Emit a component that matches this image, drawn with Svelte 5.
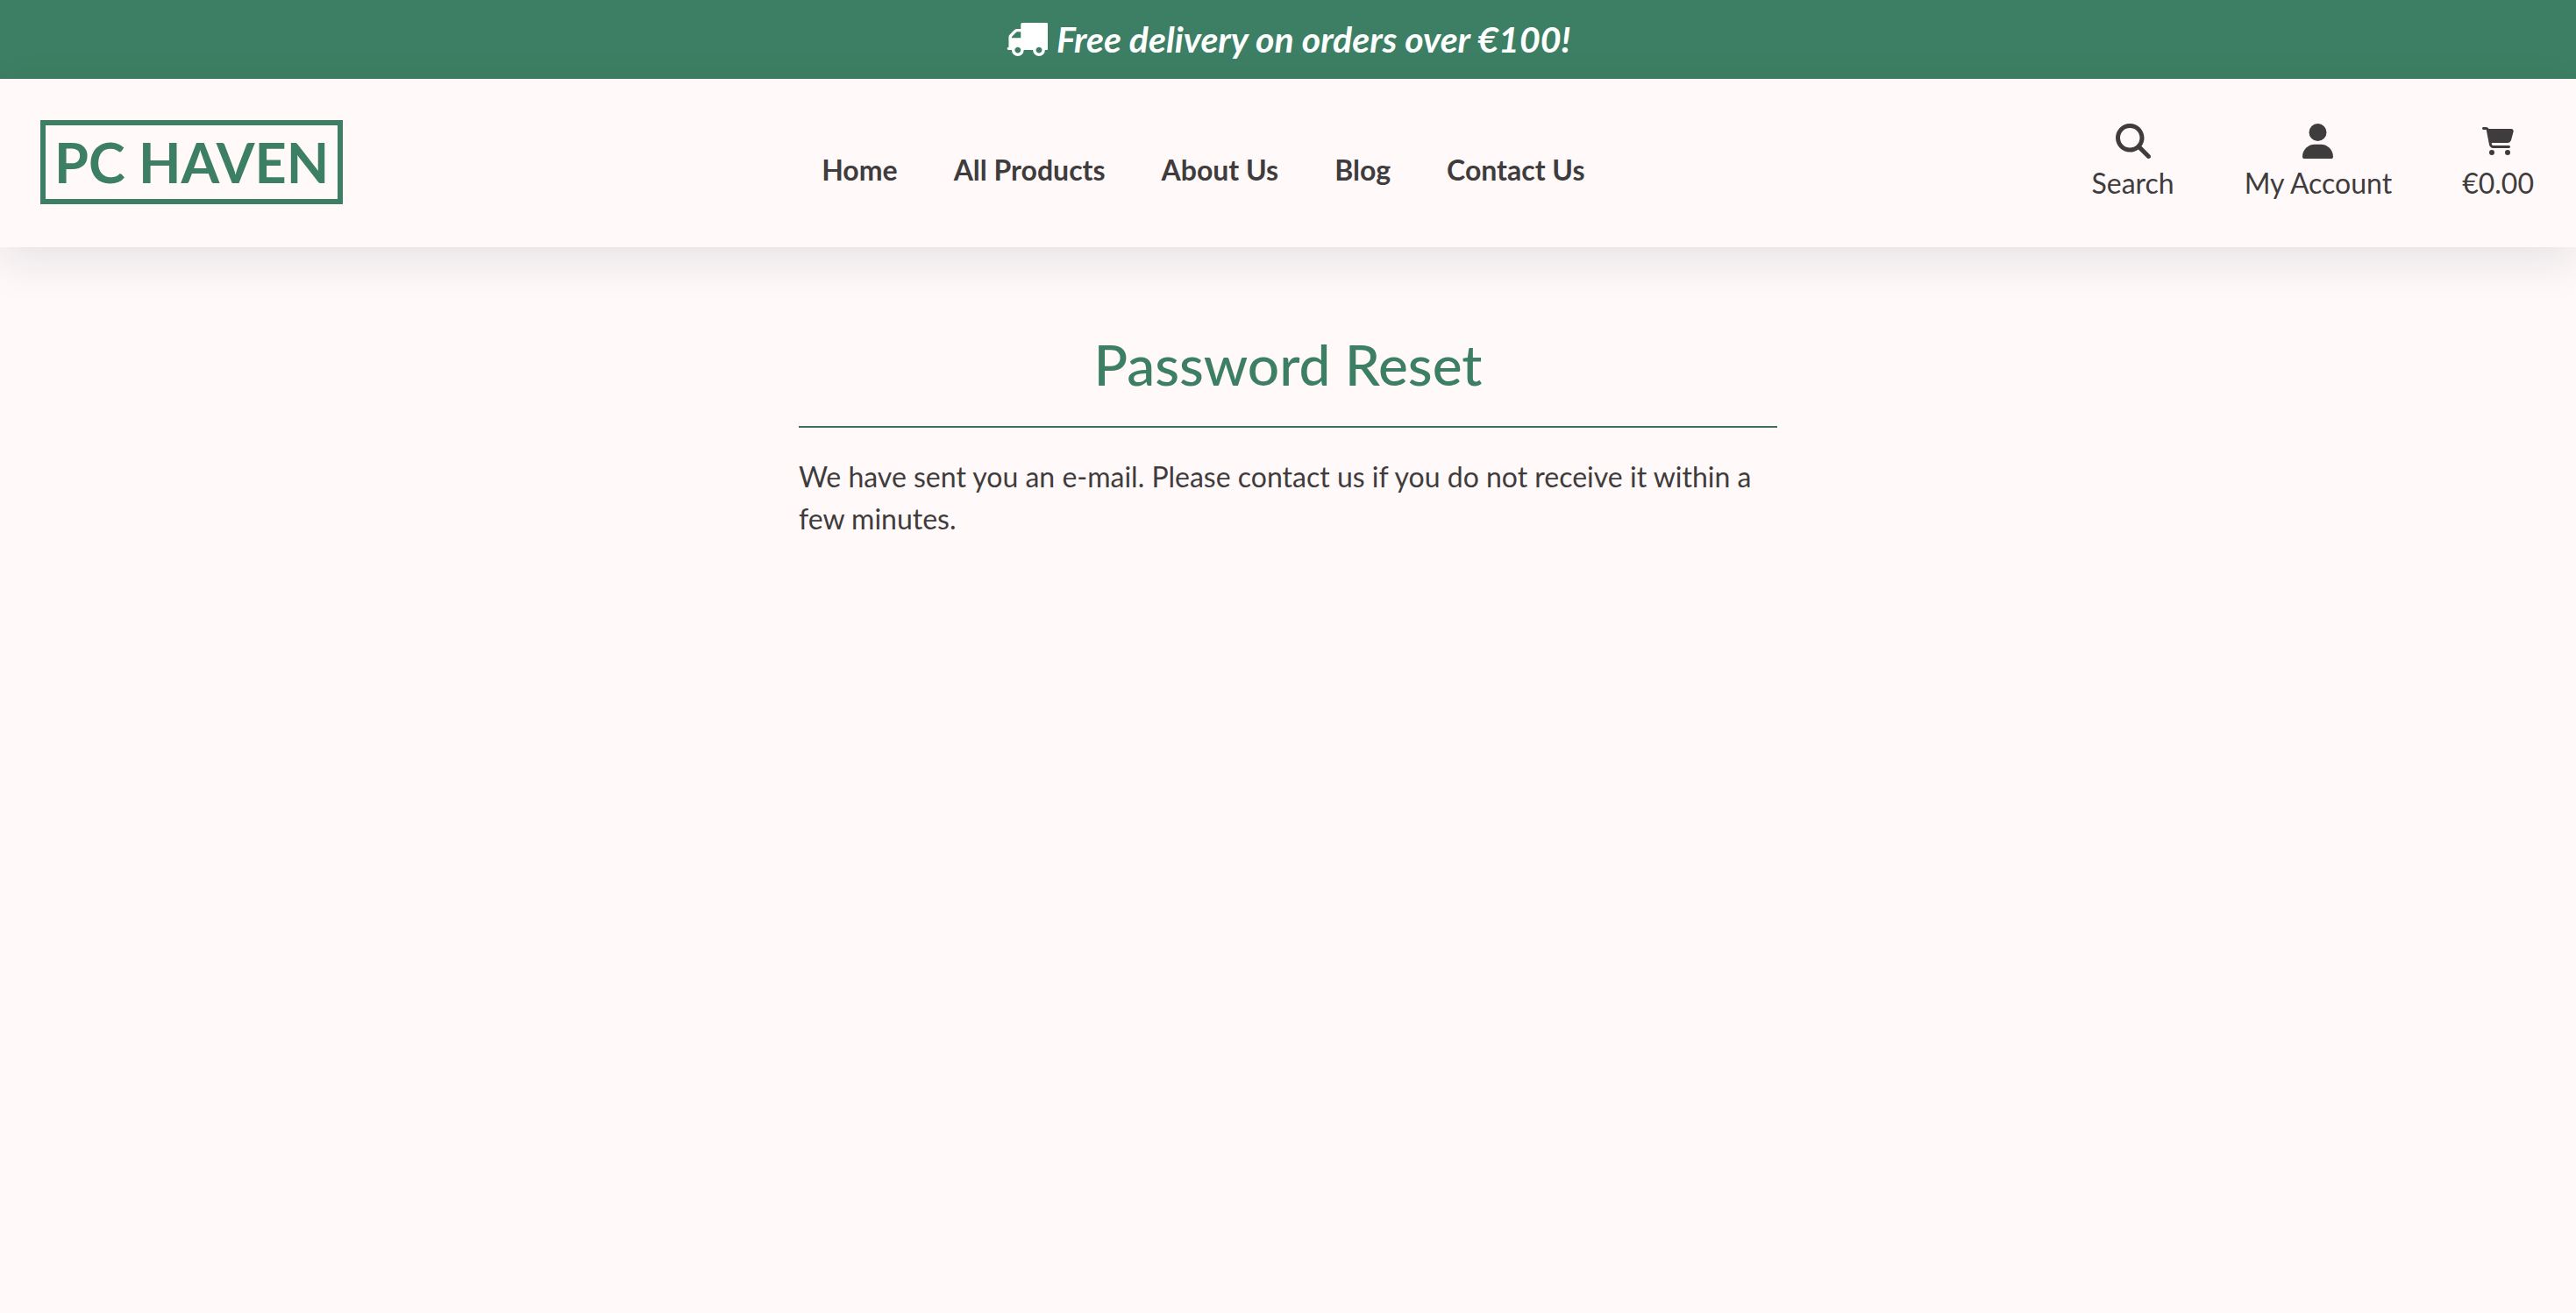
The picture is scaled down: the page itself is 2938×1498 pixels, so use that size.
<script>
  const links = ['Home', 'All Products', 'About Us', 'Blog', 'Contact Us'];
</script>

<div class="page">
  <div class="banner">
    <svg class="truck" viewBox="0 256 1792 1408" aria-hidden="true">
      <path d="M640 1408q0-52-38-90t-90-38-90 38-38 90 38 90 90 38 90-38 38-90zm-384-512h384v-256h-158q-13 0-22 9l-195 195q-9 9-9 22v30zm1280 512q0-52-38-90t-90-38-90 38-38 90 38 90 90 38 90-38 38-90zm256-1088v1024q0 15-4 26.500t-13.500 18.500-16.500 11.500-23.500 6-22.500 2-25.500 0-22.500-.5q0 106-75 181t-181 75-181-75-75-181h-384q0 106-75 181t-181 75-181-75-75-181h-64q-3 0-22.500.5t-25.500 0-22.500-2-23.500-6-16.500-11.500-13.500-18.500-4-26.500q0-26 19-45t45-19v-320q0-8-.5-35t0-38 2.500-34.500 6.500-37 14-30.500 22.500-30l198-198q19-19 50.500-32t58.500-13h160v-192q0-26 19-45t45-19h1024q26 0 45 19t19 45z" />
    </svg>
    <span>Free delivery on orders over €100!</span>
  </div>

  <header>
    <a class="logo" href="#home">PC HAVEN</a>
    <nav aria-label="Main">
      {#each links as link}
        <a href="#{link.toLowerCase().replace(' ', '-')}">{link}</a>
      {/each}
    </nav>
    <div class="tools">
      <button type="button">
        <span class="icon">
          <svg class="large" viewBox="0 0 512 512" aria-hidden="true">
            <path d="M416 208c0 45.900-14.900 88.300-40 122.700L502.600 457.400c12.500 12.500 12.500 32.800 0 45.300s-32.800 12.500-45.300 0L330.700 376c-34.400 25.200-76.800 40-122.700 40C93.100 416 0 322.900 0 208S93.100 0 208 0S416 93.100 416 208zM208 352a144 144 0 1 0 0-288 144 144 0 1 0 0 288z" />
          </svg>
        </span>
        Search
      </button>
      <button type="button">
        <span class="icon">
          <svg class="large" viewBox="0 0 448 512" aria-hidden="true">
            <path d="M224 256A128 128 0 1 0 224 0a128 128 0 1 0 0 256zm-45.700 48C79.800 304 0 383.800 0 482.300C0 498.700 13.300 512 29.700 512H418.300c16.400 0 29.700-13.300 29.700-29.700C448 383.800 368.200 304 269.700 304H178.300z" />
          </svg>
        </span>
        My Account
      </button>
      <a href="#basket">
        <span class="icon">
          <svg viewBox="0 0 576 512" aria-hidden="true">
            <path d="M0 24C0 10.700 10.700 0 24 0H69.500c22 0 41.500 12.800 50.600 32h411c26.300 0 45.500 25 38.600 50.400l-41 152.300c-8.500 31.400-37 53.300-69.500 53.300H170.700l5.400 28.500c2.200 11.300 12.100 19.500 23.600 19.500H488c13.300 0 24 10.700 24 24s-10.700 24-24 24H199.700c-34.600 0-64.300-24.600-70.700-58.500L77.400 54.500c-.7-3.800-4-6.500-7.900-6.500H24C10.700 48 0 37.300 0 24zM128 464a48 48 0 1 1 96 0 48 48 0 1 1-96 0zm336-48a48 48 0 1 1 0 96 48 48 0 1 1 0-96z" />
          </svg>
        </span>
        €0.00
      </a>
    </div>
  </header>

  <main>
    <h1>Password Reset</h1>
    <hr />
    <p>We have sent you an e-mail. Please contact us if you do not receive it within a few minutes.</p>
  </main>
</div>

<style>
  :global(body) {
    background: #fff9f9;
  }

  .page {
    min-height: 100vh;
    font-family: Lato, sans-serif;
    font-size: 32px;
    line-height: 48px;
    color: #3f3c3d;
    background: #fff9f9;
  }

  .banner {
    display: flex;
    justify-content: center;
    align-items: center;
    gap: 10px;
    height: 90px;
    font-size: 41px;
    font-weight: 700;
    font-style: italic;
    color: #fff;
    background: #3d7f64;
  }

  svg {
    display: block;
    height: 32px;
    fill: currentColor;
  }

  .truck {
    height: 38px;
  }

  .large {
    height: 40px;
  }

  header {
    display: flex;
    justify-content: space-between;
    align-items: center;
    padding: 47px 48px 49px 46px;
    box-shadow: 0 16px 48px rgba(0, 30, 50, 0.1);
  }

  .logo {
    padding: 0 10px;
    border: 6px solid #3d7f64;
    font-size: 63px;
    line-height: 84px;
    font-weight: 700;
    color: #3d7f64;
    white-space: nowrap;
  }

  a {
    color: inherit;
    text-decoration: none;
  }

  nav {
    display: flex;
    gap: 64px;
    padding-top: 18px;
    font-weight: 700;
  }

  .tools {
    display: flex;
    gap: 80px;
    padding-left: 32px;
  }

  .tools button,
  .tools a {
    display: flex;
    flex-direction: column;
    align-items: center;
    padding: 0;
    border: 0;
    font: inherit;
    color: inherit;
    background: none;
    cursor: pointer;
  }

  .icon {
    display: flex;
    align-items: center;
    height: 48px;
  }

  main {
    max-width: 1116px;
    margin: 0 auto;
    padding: 96px 0;
  }

  h1 {
    margin: 0;
    font-size: 64px;
    line-height: 76px;
    font-weight: 500;
    text-align: center;
    color: #3d7f64;
  }

  hr {
    margin: 32px 0;
    border: 0;
    border-top: 2px solid #3d6f5a;
  }

  p {
    margin: 0;
  }
</style>
